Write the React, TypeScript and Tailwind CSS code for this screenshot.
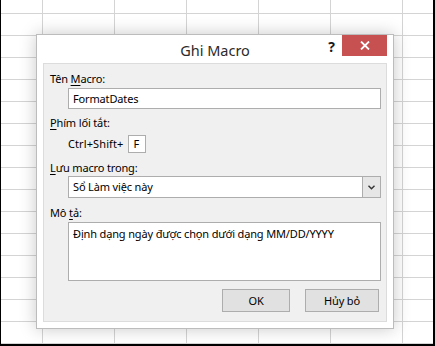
export default function App() {
  const font = { fontFamily: '"Noto Sans", "Open Sans", sans-serif' };
  return (
    <div
      className="relative h-[346px] w-[435px] overflow-hidden border-b-2 border-l border-r-2 border-black bg-white bg-[linear-gradient(to_right,#d4d4d4_1px,transparent_1px),linear-gradient(to_bottom,#d4d4d4_1px,transparent_1px)] [background-position:41px_13px] [background-size:72px_22px]"
      style={font}
    >
      <div className="absolute left-[35px] top-[34px] flex h-[295px] w-[358px] flex-col border border-[#bcbcbc] bg-white px-[6px] pb-[6px] shadow-[0_0_16px_rgba(0,0,0,0.22)]">
        <div className="relative flex h-[28px] shrink-0 items-center justify-center">
          <span className="pt-[4px] text-[14.5px] text-[#2b2b2b]">Ghi Macro</span>
          <span className="absolute right-[52px] top-[1px] text-[14px] font-bold text-[#1a1a1a]">?</span>
          <button className="absolute right-0 top-0 flex h-[21px] w-[45px] items-center justify-center bg-[#c75050]">
            <svg width="10" height="9" viewBox="0 0 10 9">
              <path d="M1 0.5 L9 8.5 M9 0.5 L1 8.5" stroke="#fff" strokeWidth="1.8" />
            </svg>
          </button>
        </div>

        <div className="flex flex-1 flex-col border border-[#dcdcdc] bg-[#f0f0f0] pl-[6px] pr-[5px] pt-[7px] text-[11px] leading-[16px] tracking-[-0.15px] text-black">
          <div>
            Tên <span className="underline underline-offset-2">M</span>acro:
          </div>
          <div className="ml-[18px] mt-[1px] flex h-[21px] items-center border border-[#adadad] bg-white pl-[4px]">
            FormatDates
          </div>

          <div className="mt-[6px]">
            <span className="underline underline-offset-2">P</span>hím lối tắt:
          </div>
          <div className="ml-[18px] mt-[4px] flex items-center gap-[5px]">
            <span className="tracking-[0.1px]">Ctrl+Shift+</span>
            <div className="flex h-[18px] w-[18px] items-center border border-[#adadad] bg-white pl-[4px]">F</div>
          </div>

          <div className="mt-[7px]">
            <span className="underline underline-offset-2">L</span>ưu macro trong:
          </div>
          <div className="ml-[18px] flex h-[22px] items-center border border-[#adadad] bg-white">
            <span className="flex-1 pl-[4px]">Sổ Làm việc này</span>
            <div className="flex h-[22px] w-[19px] -mr-px items-center justify-center border border-[#adadad] bg-[#e6e6e6]">
              <svg width="7" height="5" viewBox="0 0 7 5">
                <path d="M0.5 0.8 L3.5 3.8 L6.5 0.8" fill="none" stroke="#333" strokeWidth="1.4" />
              </svg>
            </div>
          </div>

          <div className="mt-[7px]">
            Mô <span className="underline underline-offset-2">t</span>ả:
          </div>
          <div className="ml-[18px] mt-[1px] h-[59px] border border-[#adadad] bg-white pl-[4px] pt-[3px]">
            Định dạng ngày được chọn dưới dạng MM/DD/YYYY
          </div>

          <div className="mt-[8px] flex justify-end gap-[15px] pr-[2px]">
            <button className="h-[23px] w-[68px] border border-[#adadad] bg-[#e1e1e1]">OK</button>
            <button className="h-[23px] w-[74px] border border-[#adadad] bg-[#e1e1e1]">Hủy bỏ</button>
          </div>
        </div>
      </div>
    </div>
  );
}
